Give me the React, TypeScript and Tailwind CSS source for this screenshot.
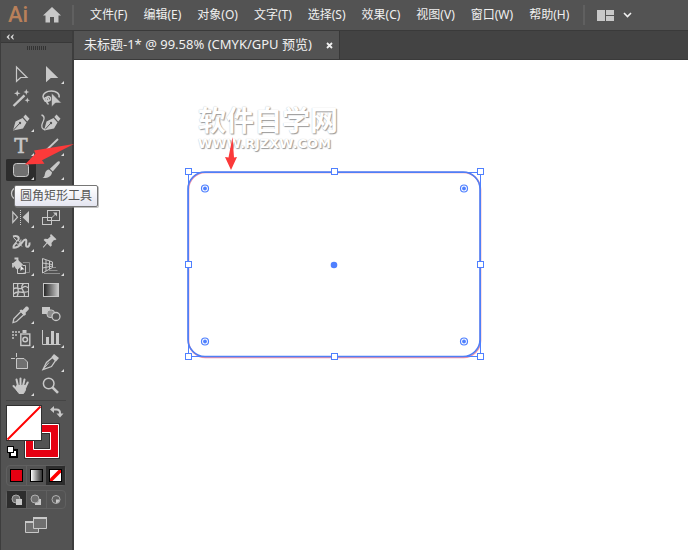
import type { ReactNode } from 'react'

const menus = ['文件(F)', '编辑(E)', '对象(O)', '文字(T)', '选择(S)', '效果(C)', '视图(V)', '窗口(W)', '帮助(H)']

type Tool = { label: string; more?: boolean; active?: boolean; icon: ReactNode }

const pen = (
  <path
    d="M7 20.5 9.5 11.5 16.5 8 20.5 12.5 17 18.5ZM17.3 7 19.5 4.5 23.5 8.8 21.2 11.5Z"
    fill="#c8c8c8"
  />
)

const tools: Tool[] = [
  {
    label: '选择工具',
    icon: <path d="M10.5 5v14.3l4.2-3.8h6.3z" fill="none" stroke="#c8c8c8" strokeWidth="1.2" />,
  },
  { label: '直接选择工具', more: true, icon: <path d="M10 4v16.3l4.8-4.3h7.5z" fill="#c8c8c8" /> },
  {
    label: '魔棒工具',
    icon: (
      <g fill="#c8c8c8">
        <path d="M7.5 20 18.5 9.3" stroke="#c8c8c8" strokeWidth="2.4" />
        <path d="m11.3 4 .8 2.4 2.4.9-2.4.9-.8 2.4-.9-2.4-2.4-.9 2.4-.9zM20.3 3l.8 2.2 2.2.8-2.2.8-.8 2.2-.8-2.2-2.2-.8 2.2-.8zM21.3 11.5l.7 2 2 .7-2 .7-.7 2-.7-2-2-.7 2-.7z" />
      </g>
    ),
  },
  {
    label: '套索工具',
    icon: (
      <g fill="none" stroke="#c8c8c8" strokeWidth="1.5">
        <path d="M23 11.5c1-3.5-2.500-6.500-7.500-6.500s-8.500 2.300-8.500 5.500c0 3.500 4 5.500 6.500 4s.5-4.500-1.500-4-2.500 5.500.5 8" />
        <circle cx="10.500" cy="13.500" r="2" />
        <path d="M15.500 7v14l4-4h6z" fill="#c8c8c8" stroke="#535353" strokeWidth=".6" />
      </g>
    ),
  },
  {
    label: '钢笔工具',
    more: true,
    icon: (
      <>
        {pen}
        <path d="m7.500 20 6-6.500" stroke="#535353" />
        <circle cx="14" cy="13" r="1.200" fill="#535353" />
      </>
    ),
  },
  {
    label: '曲率工具',
    icon: (
      <>
        <g transform="translate(1 0)">
          {pen}
          <path d="m7.500 20 6-6.500" stroke="#535353" />
          <circle cx="14" cy="13" r="1.200" fill="#535353" />
        </g>
        <path d="M5.500 5c4 1 2.500 5 1 8s-1 6.500 3 6.500" fill="none" stroke="#c8c8c8" strokeWidth="1.300" />
      </>
    ),
  },
  {
    label: '文字工具',
    more: true,
    icon: (
      <text
        x="15"
        y="19"
        textAnchor="middle"
        fontSize="20"
        stroke="#c8c8c8"
        strokeWidth=".5"
        className="fill-[#c8c8c8] font-['DejaVu_Serif',serif]"
      >
        T
      </text>
    ),
  },
  { label: '直线段工具', more: true, icon: <path d="M9 17.500 22 5" stroke="#c8c8c8" strokeWidth="1.800" /> },
  {
    label: '圆角矩形工具',
    more: true,
    active: true,
    icon: <rect x="7.500" y="5.500" width="15" height="13" rx="3" fill="#707070" stroke="#c8c8c8" />,
  },
  {
    label: '画笔工具',
    more: true,
    icon: (
      <path
        d="M23.500 3.500c.8.700.3 1.700-.5 2.700l-6.200 7.300-2.900-2.700 7-6.500c1-.9 1.900-1.500 2.600-.8zM13 11.500l3 2.800c-.2 4-4.500 6.200-9.500 5.700 2.500-1.300 2-3 2.700-5.200.6-1.900 2-3.200 3.800-3.300z"
        fill="#c8c8c8"
      />
    ),
  },
  {
    label: 'Shaper 工具',
    more: true,
    icon: <ellipse cx="11.500" cy="11.500" rx="6" ry="6" fill="none" stroke="#c8c8c8" strokeWidth="1.300" />,
  },
  { label: '橡皮擦工具', more: true, icon: <path d="m8 15 8-8 5 4-8 8h-3z" fill="#c8c8c8" /> },
  {
    label: '镜像工具',
    more: true,
    icon: (
      <>
        <path d="M6.800 6v10.500l4.700-5.300z" fill="none" stroke="#c8c8c8" strokeWidth="1.200" />
        <path d="M14.500 4v15" stroke="#c8c8c8" strokeDasharray="1 1" />
        <path d="M23 5v12.500l-6.500-6.300z" fill="#c8c8c8" />
      </>
    ),
  },
  {
    label: '比例缩放工具',
    more: true,
    icon: (
      <g fill="none" stroke="#c8c8c8">
        <rect x="11.500" y="4.500" width="12" height="10" />
        <rect x="6.500" y="11.500" width="9" height="7" />
        <path d="m15.500 12 4.500-4.500" />
        <path d="M17 6.500h4v4z" fill="#c8c8c8" stroke="none" />
      </g>
    ),
  },
  {
    label: '宽度工具',
    more: true,
    icon: (
      <g fill="none" stroke="#c8c8c8">
        <path
          d="M7 6.500c3.500-1 6.500 0 5.500 3s-5 5-5 7 4 1 6.500-1.500 3.500-5.500 5.500-5.500-.5 6 1 7 3.500-1 3-4"
          strokeWidth="2"
        />
        <path d="M6.500 18c4 .5 8-3 8.500-8.500" />
        <path d="m7.500 7.500 8.500 9" />
        <circle cx="12" cy="12.500" r="1.800" fill="#535353" />
      </g>
    ),
  },
  {
    label: '操控变形工具',
    more: true,
    icon: (
      <path
        d="m15 4 5.500 5.300-1.500.9-1-.2-2.500 3 .3 2.500-1.300 1.200-3.300-3.200-3.700 4.200-.7-.7 3.700-4.300-2.900-2.700 1.200-1.200 2.900.1 2.800-2.500-.5-1.200z"
        fill="#c8c8c8"
      />
    ),
  },
  {
    label: '形状生成器工具',
    more: true,
    icon: (
      <>
        <path d="M17 8.500h6.500v10h-6" fill="none" stroke="#888" />
        <path d="M11.500 13v6.500h8v-8h-3" fill="none" stroke="#c8c8c8" />
        <path d="m6.500 9.500 5-4 5.500 5-4.500 4.500c-.8.700-1.800.5-2.500-.2z" fill="#c8c8c8" />
        <path d="M8.500 4.500h3v3M7 9v4.500" stroke="#c8c8c8" strokeWidth="1.800" fill="none" />
        <path d="m14.500 11.500 4 4h-2.500l-1.500 1.500z" fill="#eee" />
      </>
    ),
  },
  {
    label: '透视网格工具',
    more: true,
    icon: (
      <g fill="none" stroke="#c8c8c8">
        <path d="M6.500 4.500v14.500l10-5.500v-5.500zM10 6v11M13.500 7v8M6.500 9l10 1.500M6.500 14l10-2" />
        <path d="M17 13.500h3M13 16.500h8.500M8 19.500h16" stroke="#8f8f8f" />
      </g>
    ),
  },
  {
    label: '网格工具',
    icon: (
      <g fill="none" stroke="#c8c8c8">
        <rect x="7.500" y="5.500" width="15" height="13" />
        <path
          d="M7.500 11c3.500-3 5.500 1.500 8.500-1s3.500-2 6.500 0M12 5.500c-2 3 2.500 7-1 13M7.500 16c4-4.500 8.500 0 15-2.500M17.500 5.500c-5 5 2 7 1 13"
          strokeWidth="1.300"
        />
      </g>
    ),
  },
  {
    label: '渐变工具',
    icon: <rect x="7.500" y="5.500" width="15" height="13" fill="url(#grad)" stroke="#c8c8c8" />,
  },
  {
    label: '吸管工具',
    more: true,
    icon: (
      <>
        <path d="m15 9.500 3 3-7.500 7-3.500 1 .8-3.700z" fill="none" stroke="#c8c8c8" strokeWidth="1.300" />
        <path d="m13.500 8.500 1.700-1 1.300.7 3-3.200c1.500-1.500 4.500.8 3 2.800l-3 3 .5 1.500-1.500 1.500z" fill="#c8c8c8" />
      </>
    ),
  },
  {
    label: '混合工具',
    icon: (
      <>
        <rect x="6" y="5" width="8" height="7" fill="#c8c8c8" />
        <rect x="11" y="8" width="7.500" height="7.500" rx="3" fill="#8c8c8c" stroke="#c8c8c8" />
        <circle cx="20" cy="14.500" r="4" fill="#535353" stroke="#c8c8c8" strokeWidth="1.300" />
      </>
    ),
  },
  {
    label: '符号喷枪工具',
    more: true,
    icon: (
      <>
        <path d="M6 6h8M6 9h5M6 12h2" stroke="#a8a8a8" strokeWidth="1.800" strokeDasharray="2 1" />
        <path d="M16.500 4h4v3h-4z" fill="#c8c8c8" />
        <rect x="14.800" y="8" width="9" height="11.500" fill="none" stroke="#c8c8c8" strokeWidth="1.400" />
        <circle cx="19.200" cy="13.500" r="2.300" fill="none" stroke="#c8c8c8" strokeWidth="1.500" />
      </>
    ),
  },
  {
    label: '柱形图工具',
    more: true,
    icon: (
      <>
        <path d="M6.500 4v14.500h18" fill="none" stroke="#c8c8c8" />
        <path d="M10 11h3v7h-3zM15 5h3v13h-3zM20 7h3v11h-3z" fill="#c8c8c8" />
      </>
    ),
  },
  {
    label: '画板工具',
    icon: (
      <g fill="none" stroke="#c8c8c8">
        <path d="M5 8.500h4M10.500 3v4" />
        <path d="M10.500 8.500h7.500l3.500 3.500v6.500h-11z" fill="#707070" />
      </g>
    ),
  },
  {
    label: '切片工具',
    more: true,
    icon: (
      <>
        <path d="m7 19.500 3.500-7 6-5 3 3-4 6z" fill="none" stroke="#c8c8c8" strokeWidth="1.300" />
        <path d="M7 19.500 13 12.500" stroke="#c8c8c8" />
        <path d="m15.500 7 2.500-3 5 4-3 3.500z" fill="#c8c8c8" />
      </>
    ),
  },
  {
    label: '抓手工具',
    more: true,
    icon: (
      <g fill="none" stroke="#c8c8c8" strokeWidth="2" strokeLinecap="round">
        <path d="m12 12-1.500-6.500M14.500 11.500v-7M17 12l1.500-6.500M19.500 13l2.200-4.500M11.500 16l-4-4" />
        <path d="M11 11.500h9l-.7 5-1.800 3h-4.500L10.500 16z" fill="#c8c8c8" strokeWidth="1" />
      </g>
    ),
  },
  {
    label: '缩放工具',
    icon: (
      <g fill="none" stroke="#c8c8c8">
        <circle cx="12.700" cy="9.500" r="5.300" strokeWidth="1.500" />
        <path d="m16.500 13.300 5.500 5.500" strokeWidth="2.600" />
      </g>
    ),
  },
]

function ToolButton({ tool }: { tool: Tool }) {
  return (
    <button
      type="button"
      aria-label={tool.label}
      className={tool.active ? 'h-6 rounded-xs bg-[#2d2d2d] bg-clip-content py-px' : 'h-6'}
    >
      <svg viewBox={tool.active ? '0 1 30 22' : '0 0 30 24'} className="block w-full">
        {tool.icon}
        {tool.more && <path d="M28 19v3h-3z" fill="#dcdcdc" />}
      </svg>
    </button>
  )
}

function ColorControls() {
  return (
    <div className="mt-0.5 border-t border-[#454545] pt-1">
      {/* Fill and stroke */}
      <svg viewBox="0 0 60 56" className="block w-full">
        <path d="M19.500 19.500h33v33h-33zM27.500 27.500v17h17v-17z" fill="#e60012" stroke="#fff" fillRule="evenodd" />
        <path d="M18.500 18.500h35v35h-35zM28.500 28.500v15h15v-15z" fill="none" stroke="#303030" />
        <rect x=".5" y=".5" width="35" height="35" fill="#fff" stroke="#303030" />
        <path d="M1.500 34.500 34.500 1.500" stroke="#f00" strokeWidth="2" />
        <path d="M47.500 4.500h3c2.500 0 3.500 1.500 3.500 3.500v2" fill="none" stroke="#c8c8c8" strokeWidth="2" />
        <path d="M44 4.500 48 1v7zM50.500 8.500h7L54 12.500z" fill="#c8c8c8" />
        <rect x="4" y="45" width="7" height="7" fill="#fff" stroke="#000" strokeWidth="2" />
        <rect x="1.500" y="41.500" width="6" height="6" fill="#fff" stroke="#000" />
      </svg>

      {/* Solid, gradient, none */}
      <div className="mt-1 grid h-[21px] grid-cols-3 rounded-sm border border-[#606060]">
        <button type="button" aria-label="颜色" className="flex items-center justify-center">
          <span className="size-[13px] border border-black bg-[#e60012]" />
        </button>
        <button type="button" aria-label="渐变" className="flex items-center justify-center border-l border-[#606060]">
          <span className="size-[13px] border border-black bg-linear-to-r from-white to-[#333]" />
        </button>
        <button type="button" aria-label="无" className="flex items-center justify-center bg-[#2d2d2d]">
          <svg viewBox="0 0 13 13" className="size-[13px]">
            <rect x=".5" y=".5" width="12" height="12" fill="#fff" stroke="#000" />
            <path d="M1 9.500V12h2.500L12 3.500V1H9.500z" fill="#f00" />
          </svg>
        </button>
      </div>

      {/* Drawing modes */}
      <div className="mt-1 grid h-[19px] grid-cols-3 rounded-sm border border-[#606060]">
        <button type="button" aria-label="正常绘图" className="flex items-center justify-center bg-[#2d2d2d]">
          <svg viewBox="0 0 12 12" className="size-3">
            <circle cx="5" cy="5" r="4" fill="#707070" stroke="#aaa" />
            <path d="M5 5h6v6H5z" fill="#c8c8c8" />
          </svg>
        </button>
        <button type="button" aria-label="背面绘图" className="flex items-center justify-center border-l border-[#606060]">
          <svg viewBox="0 0 12 12" className="size-3">
            <path d="M5 5h6v6H5z" fill="#c8c8c8" />
            <circle cx="5" cy="5" r="4" fill="#707070" stroke="#b0b0b0" />
          </svg>
        </button>
        <button type="button" aria-label="内部绘图" className="flex items-center justify-center border-l border-[#606060]">
          <svg viewBox="0 0 12 12" className="size-3">
            <circle cx="6" cy="5.500" r="4" fill="#606060" stroke="#b0b0b0" />
            <path d="M6 5.500h3.500A4 4 0 0 1 6 9z" fill="#c8c8c8" />
          </svg>
        </button>
      </div>

      <button type="button" aria-label="更改屏幕模式" className="mx-auto mt-2 block">
        <svg viewBox="0 0 22 16" className="block w-[22px]">
          <path d="M.5 4.500h13v11H.5z" fill="#707070" stroke="#c8c8c8" />
          <path d="M0 4h13v2H0z" fill="#c8c8c8" />
          <path d="M8.500.5h13v11h-13z" fill="#707070" stroke="#c8c8c8" />
          <path d="M8 0h14v2H8z" fill="#c8c8c8" />
        </svg>
      </button>
    </div>
  )
}

const handles = [
  [6, 6], [152, 6], [298, 6],
  [6, 99], [298, 99],
  [6, 191], [152, 191], [298, 191],
]

const corners = [[23, 22], [282, 22], [23, 175], [282, 175]]

function Artwork() {
  return (
    <svg viewBox="0 0 304 197" className="absolute top-[106px] left-[108px] w-[304px]">
      <rect x="6.500" y="6.500" width="292" height="185" rx="17" fill="none" stroke="#e8486a" strokeWidth="1.600" opacity=".6" />
      <rect x="6.500" y="6.500" width="292" height="184" fill="none" stroke="#4f80ff" strokeWidth="1" />
      <rect x="6" y="6" width="292" height="184.500" rx="17" fill="none" stroke="#4f7ff5" strokeWidth="1.600" />
      {corners.map(([x, y]) => (
        <g key={`${x}-${y}`}>
          <circle cx={x} cy={y + 0.5} r="3.500" fill="#fff" stroke="#4f80ff" strokeWidth="1.200" />
          <circle cx={x} cy={y + 0.5} r="1.900" fill="#4f80ff" />
        </g>
      ))}
      {handles.map(([x, y]) => (
        <rect key={`${x}-${y}`} x={x - 2.5} y={y - 3.5} width="6" height="6" fill="#fff" stroke="#4f80ff" />
      ))}
      <circle cx="152" cy="99" r="3.300" fill="#4f80ff" />
    </svg>
  )
}

export default function App() {
  return (
    <div className="relative flex min-h-screen flex-col bg-[#535353] font-['Noto_Sans','Noto_Sans_CJK_SC',sans-serif] text-xs text-[#f0f0f0]">
      <svg className="absolute size-0">
        <linearGradient id="grad">
          <stop stopColor="#222" />
          <stop offset="1" stopColor="#ccc" />
        </linearGradient>
      </svg>

      {/* Menu bar */}
      <header className="flex h-[31px] shrink-0 items-center border-b border-[#3a3a3a] pl-2">
        <span className="w-[34px] font-['Roboto',sans-serif] text-[22px] leading-none font-medium text-[#b9805a]">
          Ai
        </span>
        <button type="button" aria-label="主页">
          <svg viewBox="0 0 20 16" className="block w-5">
            <path d="M10 0 19 8.500h-2.500V15.500h-4.500V10h-4v5.500H3.500V8.500H1z" fill="#c8c8c8" />
          </svg>
        </button>
        <span className="ml-2.5 h-5 w-0.5 bg-[#606060]" />
        <nav className="ml-4 flex gap-4 whitespace-nowrap">
          {menus.map((m) => (
            <button type="button" key={m}>{m}</button>
          ))}
        </nav>
        <span className="ml-3.5 h-5 w-0.5 bg-[#606060]" />
        <button type="button" aria-label="排列文档" className="ml-3 flex items-center gap-2">
          <svg viewBox="0 0 18 11" className="w-[18px]">
            <path d="M0 0h8v11H0zM9 0h8v5H9zM9 6h8v5H9z" fill="#c8c8c8" />
          </svg>
          <svg viewBox="0 0 9 6" className="w-[9px]">
            <path d="m1 1 3.500 3.500L8 1" fill="none" stroke="#f0f0f0" strokeWidth="1.600" />
          </svg>
        </button>
      </header>

      <div className="flex flex-1">
        {/* Toolbox */}
        <aside className="relative w-[74px] shrink-0 border-r-2 border-l border-r-[#3d3d3d] border-l-[#3d3d3d]">
          <div className="flex h-3 items-center border-b border-[#383838] bg-[#434343] pl-[5px]">
            <svg viewBox="0 0 8 6" className="w-2">
              <path d="M3.500 0 0.500 3l3 3V4.200L2.500 3l1-1.200zM7.500 0l-3 3 3 3V4.200L6.500 3l1-1.200z" fill="#d8d8d8" />
            </svg>
          </div>
          <div className="h-[19px] pt-[3px]">
            <svg viewBox="0 0 20 4" className="mx-auto block w-5">
              <path d="M0 2h20" stroke="#333" strokeWidth="4" strokeDasharray="1 1" />
            </svg>
          </div>
          <div className="pr-1.5 pl-[5px]">
            <div className="grid grid-cols-2">
              {tools.map((tool) => (
                <ToolButton key={tool.label} tool={tool} />
              ))}
            </div>
            <ColorControls />
          </div>
          <div
            role="tooltip"
            className="absolute top-[154px] left-[13px] z-10 rounded-xs border border-[#767676] bg-linear-to-b from-white to-[#e4e5f0] px-[5px] text-xs leading-5 whitespace-nowrap text-[#575757] shadow-[1px_1px_0_#8888]"
          >
            圆角矩形工具
          </div>
        </aside>

        <main className="flex min-w-0 flex-1 flex-col">
          <div className="flex h-[29px] border-b border-[#3a3a3a] bg-[#434343]">
            <div className="flex items-center gap-3.5 border-r border-[#383838] bg-[#535353] pr-1.5 pl-2.5 text-[13px] whitespace-nowrap">
              <span>未标题-1* @ 99.58% (CMYK/GPU 预览)</span>
              <button type="button" aria-label="关闭">
                <svg viewBox="0 0 7 7" className="w-[7px]">
                  <path d="m1 1 5 5M6 1 1 6" stroke="#f0f0f0" strokeWidth="1.800" />
                </svg>
              </button>
            </div>
          </div>

          {/* Canvas */}
          <div className="relative flex-1 overflow-hidden bg-white">
            <div className="absolute top-[47px] left-[124px] whitespace-nowrap text-white [text-shadow:1px_1px_1px_#999,0_0_1px_#bbb]">
              <p className="font-['Liberation_Sans','Noto_Sans_CJK_SC',sans-serif] text-[28px] leading-[30px] font-bold">软件自学网</p>
              <p className="font-['DejaVu_Sans',sans-serif] text-[13px] leading-[14px] font-bold">WWW.RJZXW.COM</p>
            </div>
            <Artwork />
            <svg viewBox="0 0 12 33" className="absolute top-[77px] left-[151px] w-3">
              <path d="M7.500 0 9 20.500l3-.5-6 13-6-13 3.500.5z" fill="#fb3a3a" />
            </svg>
          </div>
        </main>
      </div>

      <svg viewBox="0 0 50 21" className="pointer-events-none absolute top-[144px] left-[24px] z-20 w-[50px]">
        <path d="M50 0 10 6.500l1.500 3L1 20.500l19.500-.7-2.500-3.500z" fill="#fb3a3a" />
      </svg>
    </div>
  )
}
